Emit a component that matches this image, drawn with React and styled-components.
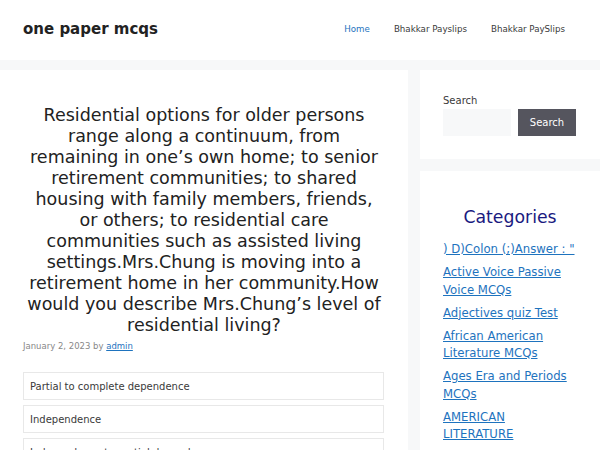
import React from 'react';
import styled, { createGlobalStyle } from 'styled-components';

const GlobalStyle = createGlobalStyle`
  html, body {
    margin: 0;
    padding: 0;
    background: #f7f8f9;
    font-family: "DejaVu Sans", sans-serif;
    color: #3a3a3a;
  }
`;

const Header = styled.header`
  background: #fff;
  height: 60px;
  display: flex;
  align-items: center;
  justify-content: space-between;
  padding: 0 23px;
`;

const Brand = styled.div`
  font-size: 15px;
  font-weight: bold;
  color: #222;
  margin-top: -2px;
`;

const Nav = styled.nav`
  display: flex;
  margin-right: 0;
`;

const NavLink = styled.a`
  font-size: 8.7px;
  color: ${(p) => (p.$active ? '#1e73be' : '#3a3a3a')};
  padding: 0 12px;
  text-decoration: none;
  margin-top: -2px;
`;

const Layout = styled.div`
  display: grid;
  grid-template-columns: 408px 1fr;
  gap: 12px;
  padding-top: 10px;
`;

const Article = styled.article`
  background: #fff;
  padding: 35px 24px 0 23px;
  height: 380px;
  overflow: hidden;
`;

const Title = styled.h1`
  margin: 0 2px 4px 3px;
  font-size: 17.5px;
  font-weight: normal;
  line-height: 21px;
  text-align: center;
  color: #222;
`;

const Meta = styled.div`
  font-size: 8.5px;
  line-height: 13px;
  color: #888;
  margin: 1px 0 19px;

  a {
    color: #1e73be;
  }
`;

const Answer = styled.div`
  border: 1px solid #e8e8e8;
  height: 28px;
  box-sizing: border-box;
  padding: 0 6px;
  display: flex;
  align-items: center;
  font-size: 10px;
  color: #3a3a3a;
  margin-bottom: 5px;
`;

const Sidebar = styled.aside`
  display: flex;
  flex-direction: column;
  gap: 12px;
`;

const Widget = styled.section`
  background: #fff;
  padding: ${(p) => p.$pad};
`;

const Label = styled.div`
  font-size: 10px;
  color: #3a3a3a;
  margin-bottom: 3px;
  margin-top: 1px;
`;

const SearchRow = styled.div`
  display: flex;
  gap: 7px;
`;

const Input = styled.div`
  width: 68px;
  height: 27px;
  background: #f7f8f9;
`;

const Button = styled.button`
  width: 58px;
  height: 27px;
  background: #55555e;
  color: #fff;
  border: none;
  font-family: inherit;
  font-size: 10px;
  padding: 0;
`;

const CatTitle = styled.h2`
  margin: 0 0 14px;
  font-size: 17.3px;
  font-weight: normal;
  color: #1a1a80;
  text-align: center;
  padding-top: 2px;
`;

const CatList = styled.ul`
  list-style: none;
  margin: 0;
  padding: 0;
  max-width: 133px;
`;

const CatItem = styled.li`
  font-size: 11.7px;
  line-height: 17.5px;
  margin-bottom: 5.5px;

  a {
    color: #1e73be;
    text-decoration: underline;
  }
`;

const answers = [
  'Partial to complete dependence',
  'Independence',
  'Independence to partial dependence',
];

const categories = [
  ') D)Colon (;)Answer : "',
  'Active Voice Passive Voice MCQs',
  'Adjectives quiz Test',
  'African American Literature MCQs',
  'Ages Era and Periods MCQs',
  'AMERICAN LITERATURE',
];

export default function App() {
  return (
    <>
      <GlobalStyle />
      <Header>
        <Brand>one paper mcqs</Brand>
        <Nav>
          <NavLink $active>Home</NavLink>
          <NavLink>Bhakkar Payslips</NavLink>
          <NavLink>Bhakkar PaySlips</NavLink>
        </Nav>
      </Header>
      <Layout>
        <Article>
          <Title>
            Residential options for older persons range along a continuum, from remaining in one’s own home; to senior
            retirement communities; to shared housing with family members, friends, or others; to residential care
            communities such as assisted living settings.Mrs.Chung is moving into a retirement home in her community.How
            would you describe Mrs.Chung’s level of residential living?
          </Title>
          <Meta>
            January 2, 2023 by <a href="#">admin</a>
          </Meta>
          {answers.map((a) => (
            <Answer key={a}>{a}</Answer>
          ))}
        </Article>
        <Sidebar>
          <Widget $pad="24px 23px 23px">
            <Label>Search</Label>
            <SearchRow>
              <Input />
              <Button>Search</Button>
            </SearchRow>
          </Widget>
          <Widget $pad="34px 23px 20px">
            <CatTitle>Categories</CatTitle>
            <CatList>
              {categories.map((c) => (
                <CatItem key={c}>
                  <a href="#">{c}</a>
                </CatItem>
              ))}
            </CatList>
          </Widget>
        </Sidebar>
      </Layout>
    </>
  );
}
